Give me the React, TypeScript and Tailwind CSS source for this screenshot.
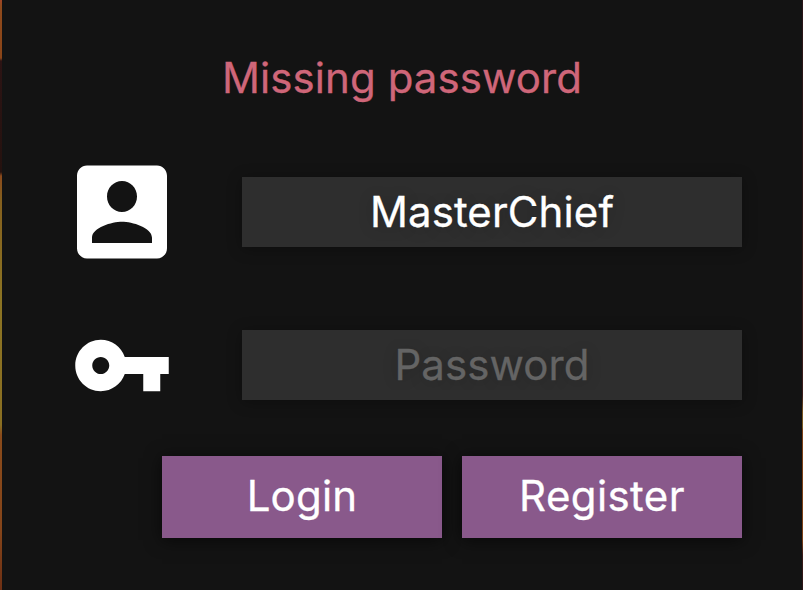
import { useState } from "react";

const edgeLeft =
  "w-[2px] bg-[linear-gradient(to_bottom,#a04426_0,#8f4a1c_6px,#8a4518_58px,#2c1414_61px,#25120f_172px,#8a4a1c_176px,#85601e_200px,#8c7423_300px,#8a6f22_425px,#8a4b1b_435px,#85451a_530px,#6e3014_590px)]";
const edgeRight =
  "w-px bg-[linear-gradient(to_bottom,#2a1518_0,#281414_200px,#3a1c1a_300px,#3a1c1a_395px,#77521f_412px,#7a5a20_427px,#7c3f16_430px,#7c3f16_540px,#3a1a18_555px,#2a1416_590px)]";

const inputStyle =
  "block h-[70px] w-[500px] bg-[#2e2e2e] p-0 text-center text-[42px] leading-[70px] tracking-[0.1px] text-white outline-none placeholder:text-[#646464] placeholder:opacity-100 shadow-[0_2px_14px_rgba(0,0,0,0.3)] [text-shadow:0_2px_16px_rgba(0,0,0,0.2)]";
const buttonStyle =
  "h-[82px] w-[280px] bg-[#89598b] pb-[2px] text-center text-[42px] leading-[80px] text-white shadow-[0_2px_16px_rgba(0,0,0,0.6)]";

function AccountIcon() {
  return (
    <svg viewBox="0 0 24 24" preserveAspectRatio="none" fill="white" className="h-[124px] w-[120px] shrink-0">
      <path d="M3 5v14c0 1.1.89 2 2 2h14c1.1 0 2-.9 2-2V5c0-1.1-.9-2-2-2H5c-1.11 0-2 .9-2 2zm12 4c0 1.66-1.34 3-3 3s-3-1.34-3-3 1.34-3 3-3 3 1.34 3 3zm-9 8c0-2 4-3.1 6-3.1s6 1.1 6 3.1v1H6v-1z" />
    </svg>
  );
}

function KeyIcon() {
  return (
    <svg viewBox="0 0 24 24" preserveAspectRatio="none" fill="white" className="h-[103px] w-[102px] shrink-0">
      <path d="M12.65 10C11.83 7.67 9.61 6 7 6c-3.31 0-6 2.69-6 6s2.69 6 6 6c2.61 0 4.83-1.67 5.65-4H17v4h4v-4h2v-4H12.65zM7 14c-1.1 0-2-.9-2-2s.9-2 2-2 2 .9 2 2-.9 2-2 2z" />
    </svg>
  );
}

export default function App() {
  const [name, setName] = useState("MasterChief");
  const [password, setPassword] = useState("");

  return (
    <div className="flex h-[590px] w-[803px] overflow-hidden bg-[#131313] font-['Inter',sans-serif] [-webkit-text-stroke:0.3px]">
      <div className={edgeLeft} />
      <form className="flex w-[800px] flex-col" onSubmit={(e) => e.preventDefault()}>
        <p className="mt-[48px] h-[60px] text-center text-[42px] leading-[60px] tracking-[0.08px] text-[#cf6679]">Missing password</p>
        <div className="mt-[42px] flex h-[124px] items-center">
          <div className="flex w-[240px] justify-center">
            <AccountIcon />
          </div>
          <input className={inputStyle} value={name} onChange={(e) => setName(e.target.value)} />
        </div>
        <div className="mt-[29px] flex h-[124px] items-center">
          <div className="flex w-[240px] justify-center">
            <KeyIcon />
          </div>
          <input
            className={inputStyle}
            type="password"
            placeholder="Password"
            value={password}
            onChange={(e) => setPassword(e.target.value)}
          />
        </div>
        <div className="mt-[29px] flex justify-end gap-5 pr-[60px]">
          <button className={`${buttonStyle} tracking-[0.2px]`}>Login</button>
          <button className={`${buttonStyle} tracking-[0.4px]`}>Register</button>
        </div>
      </form>
      <div className={edgeRight} />
    </div>
  );
}
